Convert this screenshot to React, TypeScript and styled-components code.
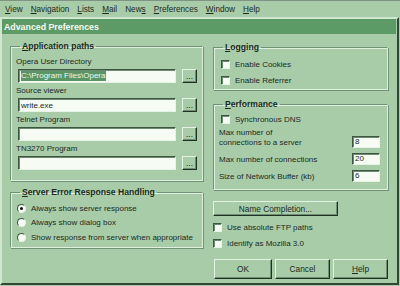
import React from "react"
import styled, { createGlobalStyle } from "styled-components"

const GlobalStyle = createGlobalStyle`
  html, body {
    margin: 0;
    padding: 0;
    background: #a8cca8;
  }
  body {
    font-family: "Liberation Sans", Arial, sans-serif;
    font-size: 8px;
    color: #1c2a1e;
  }
`

const Screen = styled.div`
  width: 400px;
  height: 286px;
  background: #a8cca8;
  overflow: hidden;
  display: flex;
  flex-direction: column;
  border-top: 1px solid #7f9484;
  box-sizing: border-box;
`

const MenuBar = styled.div`
  height: 16px;
  display: flex;
  align-items: center;
  padding-left: 5px;
  gap: 8px;
  font-size: 8.2px;
`

const MenuItem = styled.span`
  color: #1c2a1e;
  u {
    text-decoration: underline;
  }
`

const Window = styled.div`
  flex: 1;
  display: flex;
  flex-direction: column;
  border-left: 2px solid #cfe6cf;
  border-right: 2px solid #2e4a34;
  border-bottom: 2px solid #2e4a34;
  border-top: 2px solid #cfe6cf;
  margin-right: 1px;
  margin-bottom: 1px;
`

const TitleBar = styled.div`
  height: 15px;
  background: #5c9a66;
  color: #f4fbf4;
  font-weight: 700;
  font-size: 8.8px;
  display: flex;
  align-items: center;
  padding-left: 2px;
  margin-right: 1px;
`

const Content = styled.div`
  display: grid;
  grid-template-columns: 193px 175px;
  gap: 10px;
  padding: 7px 0 0 8px;
`

const Column = styled.div`
  display: flex;
  flex-direction: column;
`

const Group = styled.fieldset<{ $top?: number; $pt?: number; $pb?: number }>`
  margin: ${(p) => p.$top ?? 0}px 0 0 0;
  padding: ${(p) => p.$pt ?? 4}px 5px ${(p) => p.$pb ?? 4}px 5px;
  border: 1px solid;
  border-color: #6f9275 #dff0df #dff0df #6f9275;
  box-shadow: inset 1px 1px 0 #dff0df, 1px 1px 0 #6f9275;
  min-width: 0;
`

const Legend = styled.legend`
  font-weight: 700;
  font-size: 8.6px;
  line-height: 10px;
  padding: 0 2px;
  margin-left: 4px;
`

const FieldLabel = styled.div`
  line-height: 10px;
  height: 10px;
  margin-bottom: 2px;
`

const PathRow = styled.div`
  display: flex;
  gap: 6px;
  align-items: center;
  margin-bottom: 3px;
  padding-left: 2px;
`

const TextBox = styled.div<{ $w?: number; $h?: number }>`
  width: ${(p) => (p.$w ? `${p.$w}px` : "auto")};
  flex: ${(p) => (p.$w ? "none" : "1")};
  height: ${(p) => p.$h ?? 14}px;
  box-sizing: border-box;
  background: #f6fcf4;
  border: 1px solid;
  border-color: #3c5640 #e6f4e6 #e6f4e6 #3c5640;
  box-shadow: inset 1px 1px 0 #6f8a72;
  display: flex;
  align-items: center;
  padding-left: 2px;
  white-space: nowrap;
  overflow: hidden;
`

const Selected = styled.span`
  background: #5a9565;
  color: #eef8ee;
  line-height: 10px;
  padding-right: 1px;
`

const Button = styled.div<{ $w?: number; $h?: number }>`
  width: ${(p) => (p.$w ? `${p.$w}px` : "auto")};
  height: ${(p) => p.$h ?? 14}px;
  box-sizing: border-box;
  background: #a8cca8;
  border: 1px solid;
  border-color: #e4f3e4 #1e3222 #1e3222 #e4f3e4;
  box-shadow: inset -1px -1px 0 #6f8e73;
  display: flex;
  align-items: center;
  justify-content: center;
  flex: none;
  font-size: 8.3px;
`

const RadioRow = styled.div`
  display: flex;
  align-items: center;
  height: 14.5px;
  gap: 5px;
  padding-left: 1px;
  white-space: nowrap;
`

const Radio = styled.span<{ $on?: boolean }>`
  width: 9px;
  height: 9px;
  border-radius: 50%;
  box-sizing: border-box;
  background: #f6fcf4;
  border: 1px solid;
  border-color: #3c5640 #e6f4e6 #e6f4e6 #3c5640;
  display: flex;
  align-items: center;
  justify-content: center;
  flex: none;
  &::after {
    content: "";
    width: 3px;
    height: 3px;
    border-radius: 50%;
    background: ${(p) => (p.$on ? "#111" : "transparent")};
  }
`

const CheckRow = styled.div<{ $h?: number; $indent?: number }>`
  display: flex;
  align-items: center;
  height: ${(p) => p.$h ?? 14}px;
  gap: 5px;
  padding-left: ${(p) => p.$indent ?? 2}px;
  white-space: nowrap;
`

const CheckBox = styled.span`
  width: 9px;
  height: 9px;
  box-sizing: border-box;
  background: #f6fcf4;
  border: 1px solid;
  border-color: #3c5640 #e6f4e6 #e6f4e6 #3c5640;
  box-shadow: inset 1px 1px 0 #6f8a72;
  flex: none;
`

const PerfRow = styled.div<{ $mt?: number }>`
  display: flex;
  align-items: flex-end;
  justify-content: space-between;
  margin-top: ${(p) => p.$mt ?? 0}px;
  line-height: 10px;
  padding-right: 2px;
`

const ButtonBar = styled.div`
  display: grid;
  grid-template-columns: 58px 55px 55px;
  gap: 3px;
  margin-top: 8px;
  padding-left: 1px;
`

const paths = [
  { label: "Opera User Directory", value: "C:\\Program Files\\Opera", selected: true },
  { label: "Source viewer", value: "write.exe" },
  { label: "Telnet Program", value: "" },
  { label: "TN3270 Program", value: "" },
]

export default function App() {
  return (
    <Screen>
      <GlobalStyle />
      <MenuBar>
        <MenuItem><u>V</u>iew</MenuItem>
        <MenuItem><u>N</u>avigation</MenuItem>
        <MenuItem><u>L</u>ists</MenuItem>
        <MenuItem><u>M</u>ail</MenuItem>
        <MenuItem>New<u>s</u></MenuItem>
        <MenuItem><u>P</u>references</MenuItem>
        <MenuItem><u>W</u>indow</MenuItem>
        <MenuItem><u>H</u>elp</MenuItem>
      </MenuBar>
      <Window>
        <TitleBar>Advanced Preferences</TitleBar>
        <Content>
          <Column>
            <Group $pt={6} $pb={7}>
              <Legend><u>A</u>pplication paths</Legend>
              {paths.map((p) => (
                <div key={p.label}>
                  <FieldLabel>{p.label}</FieldLabel>
                  <PathRow>
                    <TextBox>
                      {p.selected ? <Selected>{p.value}</Selected> : p.value}
                    </TextBox>
                    <Button $w={15}>...</Button>
                  </PathRow>
                </div>
              ))}
            </Group>
            <Group $top={6} $pt={4} $pb={2}>
              <Legend><u>S</u>erver Error Response Handling</Legend>
              <RadioRow><Radio $on />Always show server response</RadioRow>
              <RadioRow><Radio />Always show dialog box</RadioRow>
              <RadioRow><Radio />Show response from server when appropriate</RadioRow>
            </Group>
          </Column>
          <Column>
            <Group $top={1} $pt={4} $pb={1}>
              <Legend><u>L</u>ogging</Legend>
              <CheckRow $h={16}><CheckBox />Enable Cookies</CheckRow>
              <CheckRow $h={16}><CheckBox />Enable Referrer</CheckRow>
            </Group>
            <Group $top={9} $pt={3} $pb={7}>
              <Legend><u>P</u>erformance</Legend>
              <CheckRow><CheckBox />Synchronous DNS</CheckRow>
              <PerfRow $mt={2}>
                <span>Max number of<br />connections to a server</span>
                <TextBox $w={28} $h={12}>8</TextBox>
              </PerfRow>
              <PerfRow $mt={5}>
                <span>Max number of connections</span>
                <TextBox $w={28} $h={12}>20</TextBox>
              </PerfRow>
              <PerfRow $mt={5}>
                <span>Size of Network Buffer (kb)</span>
                <TextBox $w={28} $h={12}>6</TextBox>
              </PerfRow>
            </Group>
            <Button $w={125} $h={15} style={{ marginTop: 11 }}>Name Completion...</Button>
            <CheckRow $h={16} $indent={0} style={{ marginTop: 3 }}><CheckBox />Use absolute FTP paths</CheckRow>
            <CheckRow $h={16} $indent={0}><CheckBox />Identify as Mozilla 3.0</CheckRow>
            <ButtonBar>
              <Button $h={20}>OK</Button>
              <Button $h={20}>Cancel</Button>
              <Button $h={20}><span><u>H</u>elp</span></Button>
            </ButtonBar>
          </Column>
        </Content>
      </Window>
    </Screen>
  )
}
